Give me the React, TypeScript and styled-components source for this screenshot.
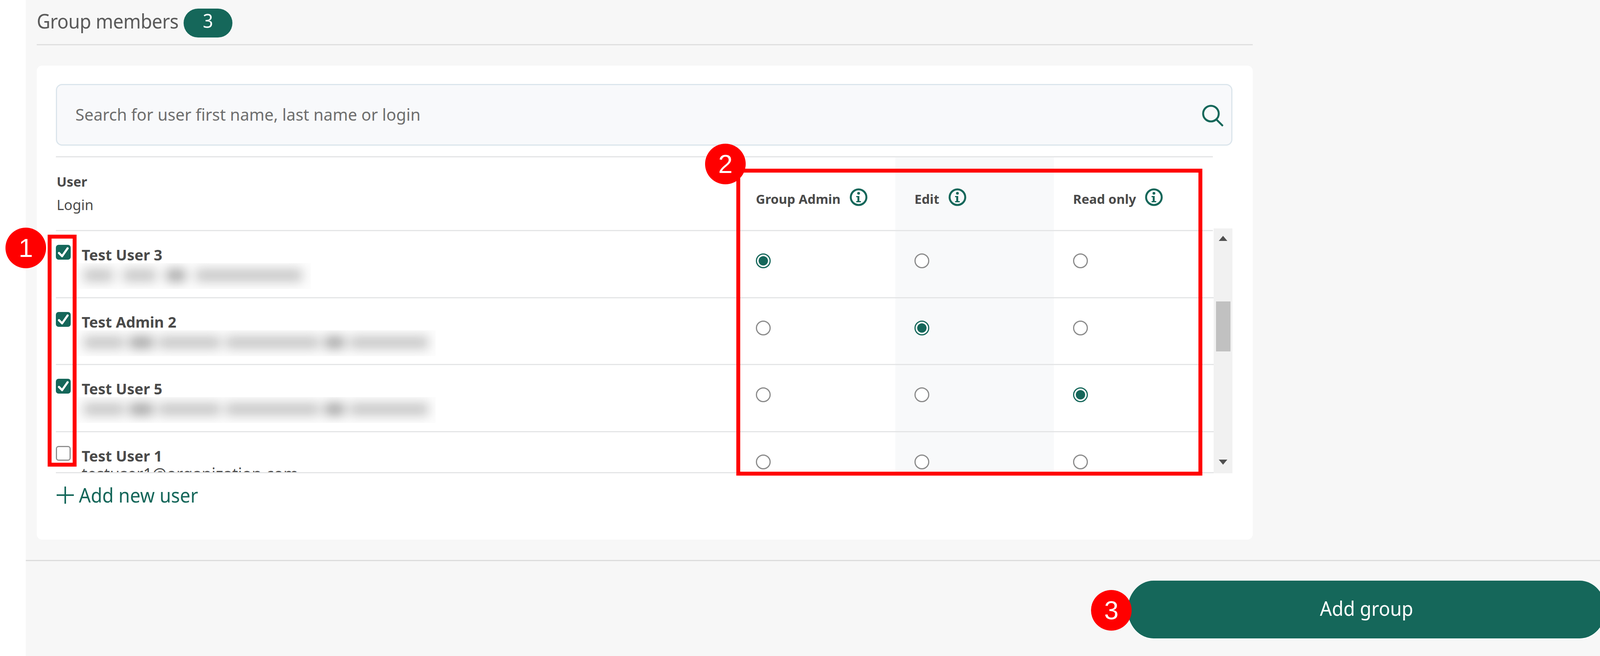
import React from "react";
import styled, { createGlobalStyle } from "styled-components";

const GREEN = "#15675a";
const LINE = "#e4e5e6";
const RED = "#ff0000";

const GlobalStyle = createGlobalStyle`
  html, body {
    margin: 0;
    width: 4129px;
    height: 1680px;
    overflow: hidden;
    background: #fff;
  }
  * { box-sizing: border-box; }
`;

const Page = styled.div`
  position: relative;
  width: 4129px;
  height: 1680px;
  padding-left: 66px;
  font-family: "Noto Sans", "Open Sans", sans-serif;
  color: #4a4a4a;
`;

const Content = styled.main`
  height: 100%;
  background: #f7f7f7;
  display: flex;
  flex-direction: column;
`;

const Section = styled.section`
  width: 3141px;
  padding-left: 28px;
`;

const Heading = styled.div`
  height: 116px;
  display: flex;
  align-items: flex-start;
  gap: 13px;
  padding-top: 22px;
  border-bottom: 3px solid #dfdfdf;
`;

// the big labels are a little taller than the font draws them
const TallText = styled.span`
  display: inline-block;
  transform: scaleY(1.07);
`;

const Title = styled.h2`
  margin: 2px 0 0;
  font-size: 48px;
  font-weight: 400;
  line-height: 60px;
  letter-spacing: -0.6px;
  color: #5a5a5a;
`;

const Badge = styled.span`
  width: 125px;
  height: 74px;
  border-radius: 37px;
  background: ${GREEN};
  color: #fff;
  font-size: 46px;
  line-height: 60px;
  text-align: center;
`;

const Card = styled.div`
  margin-top: 52px;
  height: 1214px;
  padding: 47px 52px 0 49px;
  background: #fff;
  border-radius: 14px;
`;

const SearchBox = styled.div`
  height: 158px;
  display: flex;
  align-items: center;
  justify-content: space-between;
  padding: 0 19px 4px 47px;
  background: #f8f9fb;
  border: 3px solid #dbe5ec;
  border-radius: 16px;
  font-size: 41.7px;
  color: #6e6e6e;
`;

const TableHeader = styled.div`
  margin-top: 27px;
  width: 2962px;
  height: 192px;
  display: grid;
  grid-template-columns: 1743px repeat(3, 406px);
  border-top: 3px solid ${LINE};
  border-bottom: 3px solid ${LINE};
`;

const UserHead = styled.div`
  padding: 32px 0 0 2px;
  font-size: 36px;
  line-height: 60px;
`;

const UserLabel = styled.div`
  font-size: 34px;
  font-weight: 700;
`;

const Column = styled.div<{ $shaded?: boolean }>`
  padding: 77px 0 0 49px;
  background: ${(p) => (p.$shaded ? "#f8f9fa" : "transparent")};
  display: flex;
  align-items: flex-start;
  gap: 23px;
  font-size: 33px;
  font-weight: 700;
  line-height: 60px;
`;

const InfoWrap = styled.span`
  display: flex;
  margin-top: 2px;
`;

const ScrollArea = styled.div`
  margin-top: -7px;
  height: 627px;
  display: flex;
`;

const Rows = styled.div`
  width: 2964px;
  padding-top: 7px;
  overflow: hidden;
  border-bottom: 3px solid ${LINE};
`;

const Row = styled.div`
  height: 171.6px;
  display: grid;
  grid-template-columns: 1743px repeat(3, 406px);
  border-bottom: 3px solid ${LINE};
`;

const UserCell = styled.div`
  display: flex;
  gap: 28px;
  padding-top: 35px;
`;

const CheckBox = styled.span<{ $checked?: boolean }>`
  flex: none;
  width: 38px;
  height: 38px;
  border-radius: 7px;
  display: flex;
  background: ${(p) => (p.$checked ? GREEN : "#fff")};
  border: ${(p) => (p.$checked ? "none" : "3px solid #8f8f8f")};
`;

const UserInfo = styled.div`
  padding-top: 3px;
  min-width: 0;
`;

const UserName = styled.div`
  font-size: 38px;
  font-weight: 700;
  line-height: 44px;
`;

const UserLogin = styled.div`
  height: 20px;
  overflow: hidden;
  font-size: 41px;
  line-height: 44px;
  margin-top: 2px;
`;

const BlurBlock = styled.div<{ $wide?: boolean }>`
  margin: 0 0 0 -11px;
  width: ${(p) => (p.$wide ? 917 : 598)}px;
  height: 66px;
  padding: 15px 16px;
  background: #fdfdfd;
  overflow: hidden;
`;

const BlurLine = styled.div<{ $gap: number }>`
  height: 32px;
  display: flex;
  gap: ${(p) => p.$gap}px;
  filter: blur(14px);
`;

const BlurWord = styled.span<{ $w: number; $dark?: boolean }>`
  flex: none;
  width: ${(p) => p.$w}px;
  background: ${(p) => (p.$dark ? "#a8a8a8" : "#c6c6c6")};
`;

const RadioCell = styled.div<{ $shaded?: boolean }>`
  padding: 57px 0 0 49px;
  background: ${(p) => (p.$shaded ? "#f8f9fa" : "transparent")};
`;

const Radio = styled.span<{ $on?: boolean }>`
  display: flex;
  align-items: center;
  justify-content: center;
  width: 38px;
  height: 38px;
  border-radius: 50%;
  background: #fff;
  border: 3px solid ${(p) => (p.$on ? GREEN : "#8a8a8a")};
  &::after {
    content: "";
    display: ${(p) => (p.$on ? "block" : "none")};
    width: 24px;
    height: 24px;
    border-radius: 50%;
    background: ${GREEN};
  }
`;

const ScrollBar = styled.div`
  width: 48px;
  display: flex;
  flex-direction: column;
  align-items: center;
  padding: 19px 0 22px;
  background: #f1f1f1;
`;

const ScrollThumb = styled.div`
  width: 37px;
  height: 128px;
  margin: 155px 0 auto;
  background: #c1c1c1;
`;

const AddUser = styled.div`
  margin-top: 26px;
  display: flex;
  align-items: center;
  gap: 13px;
  padding-left: 2px;
  font-size: 47.6px;
  line-height: 60px;
  color: ${GREEN};
`;

const Footer = styled.footer`
  margin-top: 52px;
  flex: 1;
  display: flex;
  justify-content: flex-end;
  padding: 50px 19px 0 0;
  border-top: 3px solid #dcdcdc;
`;

const PrimaryButton = styled.button`
  width: 1223px;
  height: 148px;
  padding: 0 0 8px;
  border: none;
  border-radius: 66px / 74px;
  background: ${GREEN};
  box-shadow: 0 3px 0 #fff;
  color: #fff;
  font-family: inherit;
  font-size: 48px;
`;

const Frame = styled.div<{ $x: number; $y: number; $w: number; $h: number }>`
  position: absolute;
  left: ${(p) => p.$x}px;
  top: ${(p) => p.$y}px;
  width: ${(p) => p.$w}px;
  height: ${(p) => p.$h}px;
  border: 10px solid ${RED};
`;

const Marker = styled.div<{ $x: number; $y: number }>`
  position: absolute;
  left: ${(p) => p.$x}px;
  top: ${(p) => p.$y}px;
  width: 104px;
  height: 104px;
  border-radius: 50%;
  background: ${RED};
  color: #fff;
  font-family: "Liberation Sans", Arial, sans-serif;
  font-size: 66px;
  line-height: 104px;
  text-align: center;
`;

const SearchIcon = () => (
  <svg width="60" height="64" viewBox="0 0 60 64" fill="none" stroke={GREEN} strokeWidth="5">
    <circle cx="27" cy="31" r="20" />
    <path d="M41 46 L56 61" strokeLinecap="round" />
  </svg>
);

const InfoIcon = () => (
  <svg width="46" height="46" viewBox="0 0 46 46" fill="none">
    <circle cx="23" cy="23" r="20" stroke={GREEN} strokeWidth="5" />
    <circle cx="23" cy="13" r="3.6" fill={GREEN} />
    <path d="M17 20h8v13h4v3H17v-3h3V23h-3z" fill={GREEN} />
  </svg>
);

const CheckIcon = () => (
  <svg width="38" height="38" viewBox="0 0 38 38" fill="none" stroke="#fff" strokeWidth="5.5">
    <path d="M8 21 L16 29 L30 9" strokeLinecap="round" strokeLinejoin="round" />
  </svg>
);

const PlusIcon = () => (
  <svg width="44" height="44" viewBox="0 0 44 44" stroke={GREEN} strokeWidth="4">
    <path d="M22 0V44M0 22H44" />
  </svg>
);

const ArrowIcon = ({ down }: { down?: boolean }) => (
  <svg width="22" height="13" viewBox="0 0 22 13" fill="#505050">
    <path d={down ? "M0 0H22L11 13Z" : "M11 0L22 13H0Z"} />
  </svg>
);

const columns = ["Group Admin", "Edit", "Read only"];

// the logins are blurred in the picture, so only their shape is kept
const BLUR_SHORT = { gap: 26, words: [75, 85, 49, 272], dark: [2] };
const BLUR_LONG = { gap: 14, words: [104, 60, 158, 239, 51, 200], dark: [1, 4] };

const users = [
  { name: "Test User 3", checked: true, role: 0, blur: BLUR_SHORT },
  { name: "Test Admin 2", checked: true, role: 1, blur: BLUR_LONG, wide: true },
  { name: "Test User 5", checked: true, role: 2, blur: BLUR_LONG, wide: true },
  { name: "Test User 1", checked: false, role: -1, login: "testuser1@organization.com" },
];

export default function App() {
  return (
    <Page>
      <GlobalStyle />
      <Content>
        <Section>
          <Heading>
            <Title>
              <TallText>Group members</TallText>
            </Title>
            <Badge>
              <TallText>3</TallText>
            </Badge>
          </Heading>
          <Card>
            <SearchBox>
              Search for user first name, last name or login
              <SearchIcon />
            </SearchBox>
            <TableHeader>
              <UserHead>
                <UserLabel>User</UserLabel>
                Login
              </UserHead>
              {columns.map((c, i) => (
                <Column key={c} $shaded={i === 1}>
                  {c}
                  <InfoWrap>
                    <InfoIcon />
                  </InfoWrap>
                </Column>
              ))}
            </TableHeader>
            <ScrollArea>
              <Rows>
                {users.map((u) => (
                  <Row key={u.name}>
                    <UserCell>
                      <CheckBox $checked={u.checked}>{u.checked && <CheckIcon />}</CheckBox>
                      <UserInfo>
                        <UserName>{u.name}</UserName>
                        {u.login ? (
                          <UserLogin>{u.login}</UserLogin>
                        ) : (
                          <BlurBlock $wide={u.wide}>
                            <BlurLine $gap={u.blur?.gap ?? 0}>
                              {u.blur?.words.map((w, i) => (
                                <BlurWord key={i} $w={w} $dark={u.blur?.dark.includes(i)} />
                              ))}
                            </BlurLine>
                          </BlurBlock>
                        )}
                      </UserInfo>
                    </UserCell>
                    {columns.map((c, i) => (
                      <RadioCell key={c} $shaded={i === 1}>
                        <Radio $on={u.role === i} />
                      </RadioCell>
                    ))}
                  </Row>
                ))}
              </Rows>
              <ScrollBar>
                <ArrowIcon />
                <ScrollThumb />
                <ArrowIcon down />
              </ScrollBar>
            </ScrollArea>
            <AddUser>
              <PlusIcon />
              <TallText>Add new user</TallText>
            </AddUser>
          </Card>
        </Section>
        <Footer>
          <PrimaryButton>
            <TallText>Add group</TallText>
          </PrimaryButton>
        </Footer>
      </Content>
      <Frame $x={122} $y={601} $w={74} $h={594} />
      <Frame $x={1885} $y={432} $w={1193} $h={786} />
      <Marker $x={14} $y={583}>1</Marker>
      <Marker $x={1805} $y={368}>2</Marker>
      <Marker $x={2793} $y={1511}>3</Marker>
    </Page>
  );
}
